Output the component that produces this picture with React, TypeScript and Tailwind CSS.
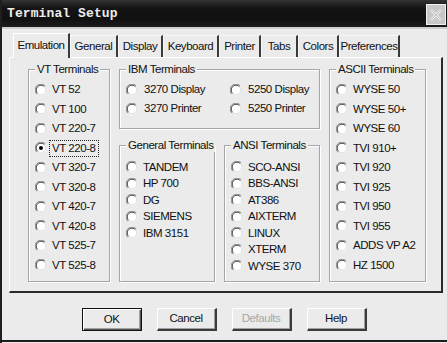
import React from "react";

const FONT = { fontFamily: "'Liberation Sans', Arial, sans-serif" };
const TXT = "text-[11.5px] tracking-[-0.45px]";

function Radio({ checked = false }: { checked?: boolean }) {
  return (
    <svg width="12" height="12" viewBox="0 0 12 12" className="shrink-0">
      <circle cx="6" cy="6" r="5.5" fill="#ffffff" />
      <path d="M1.8 10.2 A5.5 5.5 0 0 1 10.2 1.8" fill="none" stroke="#8a8a8a" strokeWidth="1" />
      <path d="M2.6 9.4 A4.6 4.6 0 0 1 9.4 2.6" fill="none" stroke="#404040" strokeWidth="1" />
      <path d="M9.4 2.6 A4.6 4.6 0 0 1 2.6 9.4" fill="none" stroke="#dcdcdc" strokeWidth="1" />
      {checked && <circle cx="6" cy="6" r="2" fill="#000000" />}
    </svg>
  );
}

function Item({ label, h, checked = false, focus = false, gap = "gap-[5px]" }: { label: string; h: string; checked?: boolean; focus?: boolean; gap?: string }) {
  return (
    <div className={`flex items-center ${gap} ${h}`}>
      <Radio checked={checked} />
      <span className={`${TXT} leading-none text-[#111] whitespace-nowrap ${focus ? "outline outline-1 outline-dotted outline-[#222] outline-offset-[2px]" : ""}`}>{label}</span>
    </div>
  );
}

function Group({ title, children, className = "", pt = "pt-[10px]", px = "pl-[6px]" }: { title: string; children: React.ReactNode; className?: string; pt?: string; px?: string }) {
  return (
    <div className={`relative border border-[#a6a6a6] shadow-[inset_1px_1px_0_#ffffff,1px_1px_0_#ffffff] ${className}`}>
      <span className={`absolute left-[6px] top-[-8px] bg-[#ebebeb] px-[2px] ${TXT} leading-[14px] text-[#111] whitespace-nowrap`}>{title}</span>
      <div className={`${pt} ${px}`}>{children}</div>
    </div>
  );
}

function Tab({ label, w, selected = false }: { label: string; w: string; selected?: boolean }) {
  if (selected) {
    return (
      <div className={`${w} h-[25px] relative z-10 mb-[-1px] bg-[#ebebeb] border-t border-l border-white border-r-2 border-r-[#3a3a3a] flex items-center justify-center ${TXT} text-[#111]`}>
        {label}
      </div>
    );
  }
  return (
    <div className={`${w} h-[22px] border-t border-l border-[#f8f8f8] border-r-2 border-r-[#3a3a3a] flex items-center justify-center ${TXT} text-[#111]`}>
      {label}
    </div>
  );
}

function Button({ label, isDefault = false, disabled = false }: { label: string; isDefault?: boolean; disabled?: boolean }) {
  return (
    <div
      className={`w-[60px] h-[23px] flex items-center justify-center ${TXT} ${
        isDefault
          ? "border border-[#111] shadow-[inset_1px_1px_0_#ffffff,inset_-1px_-1px_0_#555555,inset_-2px_-2px_0_#a0a0a0]"
          : "border-t border-l border-white border-r-2 border-b-2 border-r-[#3a3a3a] border-b-[#3a3a3a] shadow-[inset_-1px_-1px_0_#a0a0a0]"
      } ${disabled ? "text-[#a8a8a8]" : "text-[#111]"}`}
    >
      {label}
    </div>
  );
}

export default function App() {
  const vt = ["VT 52", "VT 100", "VT 220-7", "VT 220-8", "VT 320-7", "VT 320-8", "VT 420-7", "VT 420-8", "VT 525-7", "VT 525-8"];
  const gen = ["TANDEM", "HP 700", "DG", "SIEMENS", "IBM 3151"];
  const ansi = ["SCO-ANSI", "BBS-ANSI", "AT386", "AIXTERM", "LINUX", "XTERM", "WYSE 370"];
  const ascii = ["WYSE 50", "WYSE 50+", "WYSE 60", "TVI 910+", "TVI 920", "TVI 925", "TVI 950", "TVI 955", "ADDS VP A2", "HZ 1500"];

  return (
    <div className="w-[447px] h-[343px] overflow-hidden bg-[#ebebeb] flex flex-col border-l-2 border-[#1e1e1e]" style={FONT}>
      {/* title bar */}
      <div className="h-[27px] shrink-0 flex items-center justify-between bg-[linear-gradient(#333333,#141414_30%,#101010_70%,#1c1c1c)] pl-[5px] pr-[1px]">
        <span
          className="text-[13px] font-bold text-[#ececec] tracking-[0.1px]"
          style={{ fontFamily: "'Liberation Mono', 'DejaVu Sans Mono', monospace" }}
        >
          Terminal Setup
        </span>
        <div className="w-[20px] h-[21px] mt-[2px] bg-[#c8c8c8] border border-[#f0f0f0] flex items-center justify-center">
          <svg width="14" height="14" viewBox="0 0 14 14">
            <path d="M2 2 L12 12 M12 2 L2 12" stroke="#f4f4f4" strokeWidth="2.2" />
            <path d="M2 2 L12 12 M12 2 L2 12" stroke="#9a9a9a" strokeWidth="0.6" />
          </svg>
        </div>
      </div>
      <div className="h-[2px] bg-[#cfcfcf] shrink-0" />

      <div className="flex flex-col pl-[7px] pr-[4px] pt-[4px]">
        {/* tabs */}
        <div className="flex items-end pl-[4px] h-[24px]">
          <Tab label="Emulation" w="w-[57px]" selected />
          <Tab label="General" w="w-[48px]" />
          <Tab label="Display" w="w-[45px]" />
          <Tab label="Keyboard" w="w-[56px]" />
          <Tab label="Printer" w="w-[42px]" />
          <Tab label="Tabs" w="w-[37px]" />
          <Tab label="Colors" w="w-[41px]" />
          <Tab label="Preferences" w="w-[61px]" />
        </div>

        {/* panel */}
        <div className="h-[236px] border-t border-l border-white border-r-2 border-b-2 border-r-[#2a2a2a] border-b-[#2a2a2a] pl-[18px] pt-[11px]">
          <div className="grid grid-cols-[82px_96px_96px_97px] grid-rows-[60px_137px] gap-x-[9px] gap-y-[16px]">
            <Group title="VT Terminals" className="row-span-2" pt="pt-[10px]">
              {vt.map((v) => (
                <Item key={v} label={v} h="h-[19.5px]" checked={v === "VT 220-8"} focus={v === "VT 220-8"} />
              ))}
            </Group>
            <Group title="IBM Terminals" className="col-span-2" pt="pt-[10px]">
              <div className="flex">
                <div className="w-[104px]">
                  <Item label="3270 Display" h="h-[19px]" gap="gap-[6px]" />
                  <Item label="3270 Printer" h="h-[19px]" gap="gap-[6px]" />
                </div>
                <div>
                  <Item label="5250 Display" h="h-[19px]" gap="gap-[6px]" />
                  <Item label="5250 Printer" h="h-[19px]" gap="gap-[6px]" />
                </div>
              </div>
            </Group>
            <Group title="ASCII Terminals" className="row-span-2" pt="pt-[10px]">
              {ascii.map((v) => (
                <Item key={v} label={v} h="h-[19.5px]" />
              ))}
            </Group>
            <Group title="General Terminals" pt="pt-[13px]">
              {gen.map((v) => (
                <Item key={v} label={v} h="h-[16.5px]" />
              ))}
            </Group>
            <Group title="ANSI Terminals" pt="pt-[13px]">
              {ansi.map((v) => (
                <Item key={v} label={v} h="h-[16.5px]" />
              ))}
            </Group>
          </div>
        </div>

        {/* buttons */}
        <div className="flex justify-center gap-[15px] pt-[15px] pr-[4px]">
          <Button label="OK" isDefault />
          <Button label="Cancel" />
          <Button label="Defaults" disabled />
          <Button label="Help" />
        </div>
      </div>
      <div className="flex-1" />
      <div className="h-[2px] bg-[#1e1e1e] shrink-0" />
      <div className="h-[1px] shrink-0" />
    </div>
  );
}
